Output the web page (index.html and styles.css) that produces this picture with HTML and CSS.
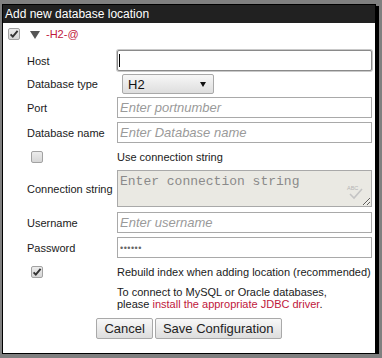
FILE: index.html
```html
<!DOCTYPE html>
<html>
<head>
<meta charset="utf-8">
<link rel="stylesheet" href="styles.css">
</head>
<body>
<div class="dialog">
  <div class="titlebar">Add new database location</div>
  <div class="content">
    <div class="head">
      <span class="cb checked"><svg viewBox="0 0 12 12" width="12" height="12"><path d="M2.6 6.3 L4.8 8.6 L9.6 2.8" fill="none" stroke="#333" stroke-width="1.9"/></svg></span>
      <span class="tri"></span>
      <span class="loc">-H2-@</span>
    </div>
    <div class="form">
      <label class="lbl">Host</label>
      <span class="focus-wrap"><input class="field focused" type="text"></span>

      <label class="lbl">Database type</label>
      <span class="select-wrap"><select class="select"><option>H2</option></select></span>

      <label class="lbl">Port</label>
      <input class="field" type="text" placeholder="Enter portnumber">

      <label class="lbl">Database name</label>
      <input class="field" type="text" placeholder="Enter Database name">

      <span class="cbcell"><span class="cb"></span></span>
      <span class="txt">Use connection string</span>

      <label class="lbl">Connection string</label>
      <span class="ta-wrap"><textarea class="area" placeholder="Enter connection string"></textarea><svg class="spell" viewBox="0 0 24 16" width="24" height="16"><text x="4" y="6" font-size="5.5" font-family="Liberation Sans, sans-serif" fill="#b5b5b5">ABC</text><path d="M7 10 L11 14 L19 5" fill="none" stroke="#c4c4c4" stroke-width="1.6"/></svg></span>

      <label class="lbl">Username</label>
      <input class="field" type="text" placeholder="Enter username">

      <label class="lbl">Password</label>
      <input class="field pw" type="password" value="secret">

      <span class="cbcell"><span class="cb checked"><svg viewBox="0 0 12 12" width="12" height="12"><path d="M2.6 6.3 L4.8 8.6 L9.6 2.8" fill="none" stroke="#333" stroke-width="1.9"/></svg></span></span>
      <span class="txt">Rebuild index when adding location (recommended)</span>

      <span></span>
      <span class="note">To connect to MySQL or Oracle databases,<br>please <span class="link">install the appropriate JDBC driver</span>.</span>
    </div>
    <div class="buttons">
      <button class="btn">Cancel</button><button class="btn">Save Configuration</button>
    </div>
  </div>
</div>
</body>
</html>
```

FILE: styles.css
```css
html, body {
  margin: 0;
  padding: 0;
  background: #808080;
  font-family: "Liberation Sans", Arial, sans-serif;
}
.dialog {
  margin: 4px 0 0 2px;
  width: 372px;
  border: 1px solid #000;
  box-shadow: 3px 2px 0 #000;
  background: #fff;
}
.titlebar {
  height: 18px;
  background: #212121;
  color: #fff;
  font-size: 12px;
  line-height: 18px;
  padding-left: 2px;
}
.content {
  height: 330px;
  padding: 5px 0 0 5px;
  box-sizing: border-box;
}
.head {
  display: flex;
  align-items: center;
  height: 12px;
}
.cb {
  display: inline-block;
  width: 12px;
  height: 12px;
  box-sizing: border-box;
  border: 1px solid #a2a2a2;
  border-radius: 2px;
  background: linear-gradient(#ececec, #d6d6d6);
  position: relative;
}
.cb svg {
  position: absolute;
  left: -1px;
  top: -1px;
}
.tri {
  width: 0;
  height: 0;
  margin-left: 10px;
  border-left: 5.5px solid transparent;
  border-right: 5.5px solid transparent;
  border-top: 8px solid #555;
  margin-top: 1px;
}
.loc {
  margin-left: 6px;
  color: #c0173c;
  font-size: 11px;
}
.form {
  margin: 9px 0 0 19px;
  display: grid;
  grid-template-columns: 90px 255px;
  grid-template-rows: 23px 24px 23px 27px 22px 41px 27px 23px 26px 26px;
  align-items: center;
}
.lbl, .txt {
  font-size: 11px;
  color: #1a1a1a;
}
.field {
  width: 255px;
  height: 21px;
  box-sizing: border-box;
  border: 1px solid #a9a9a9;
  padding: 0 2px;
  font-family: "Liberation Sans", Arial, sans-serif;
  font-size: 13px;
  margin: 0;
  outline: none;
  background: #fff;
}
.field::placeholder {
  color: #9a9a9a;
  font-style: italic;
}
.focus-wrap {
  position: relative;
  display: block;
}
.field.focused {
  border: 1px solid #8a8a8a;
  border-radius: 2px;
  box-shadow: 0 0 0 1px #c9c9c9;
}
.focus-wrap::after {
  content: "";
  position: absolute;
  left: 2px;
  top: 4px;
  width: 1px;
  height: 13px;
  background: #000;
}
.pw {
  color: #666;
  font-size: 9px;
  letter-spacing: 0.5px;
}
.select-wrap {
  position: relative;
  display: block;
  margin-left: 5px;
  width: 92px;
}
.select {
  appearance: none;
  -webkit-appearance: none;
  width: 92px;
  height: 20px;
  box-sizing: border-box;
  border: 1px solid #a9a9a9;
  border-radius: 2px;
  background: linear-gradient(#f7f7f7, #dedede);
  font-family: "Liberation Sans", Arial, sans-serif;
  font-size: 13px;
  color: #111;
  padding: 0 0 0 5px;
  margin: 0;
}
.select-wrap::after {
  content: "";
  position: absolute;
  right: 8px;
  top: 8px;
  border-left: 3.5px solid transparent;
  border-right: 3.5px solid transparent;
  border-top: 5px solid #111;
}
.cbcell {
  padding-left: 4px;
  height: 12px;
}
.cbcell .cb {
  display: block;
}
.ta-wrap {
  position: relative;
  display: block;
  height: 37px;
}
.area {
  display: block;
  width: 255px;
  height: 37px;
  box-sizing: border-box;
  margin: 0;
  border: 1px solid #a9a9a9;
  background: #eae9e3;
  font-family: "Liberation Mono", monospace;
  font-size: 13px;
  padding: 3px 2px 2px;
  outline: none;
}
.area::placeholder {
  color: #8a8a8a;
}
.spell {
  position: absolute;
  right: 5px;
  top: 14px;
}
.note {
  font-size: 11px;
  line-height: 12.5px;
  color: #1a1a1a;
}
.link {
  color: #c0173c;
}
.buttons {
  display: flex;
  justify-content: center;
  gap: 2px;
  margin-top: 7px;
  padding-right: 5px;
}
.btn {
  height: 21px;
  margin: 0;
  padding: 0 7px;
  border: 1px solid #a9a9a9;
  border-radius: 2px;
  background: linear-gradient(#f8f8f8, #dddddd);
  font-family: "Liberation Sans", Arial, sans-serif;
  font-size: 13px;
  color: #222;
}
```
